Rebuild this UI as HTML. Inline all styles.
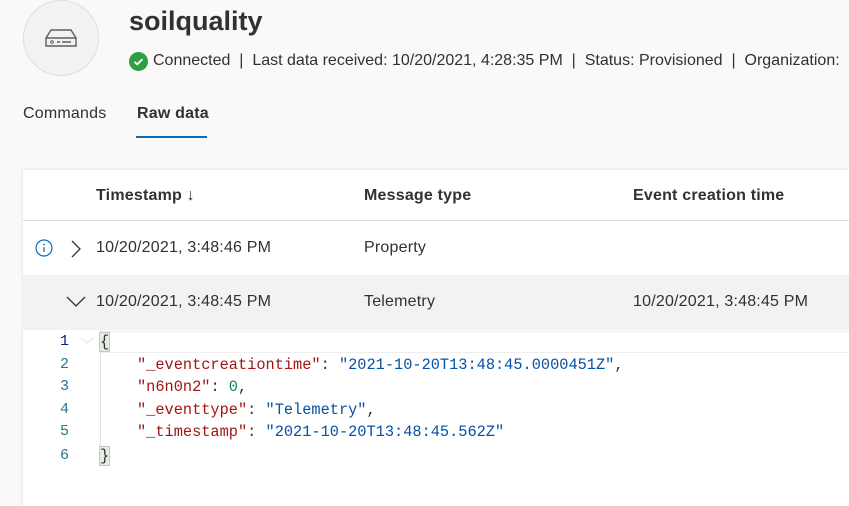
<!DOCTYPE html>
<html><head><style>
body{margin:0;width:849px;height:506px;background:#faf9f8;overflow:hidden;position:relative;font-family:"Segoe UI","Liberation Sans",sans-serif;color:#323130}
.a{position:absolute;white-space:nowrap}
.t{font-size:16px;letter-spacing:0.2px}
.circ{left:23px;top:0;width:76px;height:76px;border-radius:50%;border:1px solid #e1dfdd;background:#f3f2f1;box-sizing:border-box}
.card{left:23px;top:170px;width:826px;height:336px;background:#fff;box-shadow:0 0 3px rgba(0,0,0,.12)}
.mono{font-family:"Liberation Mono",monospace;font-size:15.3px}
.k{color:#a31515}.s{color:#0451a5}.n{color:#098658}
.ln{color:#237893;font-family:"Liberation Mono",monospace;font-size:15px;width:30px;text-align:right}
</style></head><body>
<div class="a circ"></div>
<svg class="a" style="left:44px;top:28px" width="34" height="20" viewBox="0 0 34 20"><path d="M7 2h20l5 8v8H2v-8z M2 10h30" fill="none" stroke="#605e5c" stroke-width="1.4"/><circle cx="8" cy="14" r="1.3" fill="none" stroke="#605e5c"/><path d="M13 14h3M18 14h9" stroke="#605e5c" stroke-width="1.4"/></svg>
<div class="a" style="left:129px;top:6px;font-size:27px;font-weight:600;color:#323130">soilquality</div>
<svg class="a" style="left:129px;top:52px" width="19" height="19"><circle cx="9.5" cy="9.5" r="9.5" fill="#2ea043"/><path d="M5.5 9.8l2.7 2.6 5.3-5.3" fill="none" stroke="#fff" stroke-width="1.8"/></svg>
<div class="a t" style="left:153px;top:52px;letter-spacing:0">Connected &nbsp;|&nbsp; Last data received: 10/20/2021, 4:28:35 PM &nbsp;|&nbsp; Status: Provisioned &nbsp;|&nbsp; Organization:</div>
<div class="a t" style="left:23px;top:105px">Commands</div>
<div class="a t" style="left:137px;top:105px;font-weight:600">Raw data</div>
<div class="a" style="left:136px;top:136px;width:71px;height:2px;background:#0f6cbd"></div>
<div class="a card"></div>
<div class="a" style="left:23px;top:220px;width:826px;height:1px;background:#e1dfdd"></div>
<div class="a t" style="left:96px;top:187px;font-weight:600">Timestamp ↓</div>
<div class="a t" style="left:364px;top:187px;font-weight:600">Message type</div>
<div class="a t" style="left:633px;top:187px;font-weight:600">Event creation time</div>
<svg class="a" style="left:35px;top:239px" width="18" height="18"><circle cx="9" cy="9" r="8" fill="none" stroke="#0f6cbd" stroke-width="1.2"/><path d="M9 8v5" stroke="#0f6cbd" stroke-width="1.3"/><circle cx="9" cy="5.5" r=".9" fill="#0f6cbd"/></svg>
<svg class="a" style="left:70px;top:240px" width="12" height="18"><path d="M2 1l8 8-8 8" fill="none" stroke="#323130" stroke-width="1.3"/></svg>
<div class="a t" style="left:96px;top:239px">10/20/2021, 3:48:46 PM</div>
<div class="a t" style="left:364px;top:239px">Property</div>
<div class="a" style="left:23px;top:275px;width:826px;height:55px;background:#f3f2f1"></div>
<svg class="a" style="left:66px;top:296px" width="20" height="12"><path d="M1 1l9 9 9-9" fill="none" stroke="#323130" stroke-width="1.3"/></svg>
<div class="a t" style="left:96px;top:293px">10/20/2021, 3:48:45 PM</div>
<div class="a t" style="left:364px;top:293px">Telemetry</div>
<div class="a t" style="left:633px;top:293px">10/20/2021, 3:48:45 PM</div>
<div class="a" style="left:100px;top:331px;width:749px;height:20px;border-top:1px solid #eee;border-bottom:1px solid #eee"></div>
<div class="a" style="left:100px;top:330px;width:1px;height:135px;background:#e0e0e0"></div>
<svg class="a" style="left:80px;top:337px" width="14" height="8"><path d="M1 1l6 5 6-5" fill="none" stroke="#e3e3e3" stroke-width="1"/></svg>
<div class="a ln" style="left:39px;top:333px;color:#0b216f">1</div>
<div class="a ln" style="left:39px;top:356px">2</div>
<div class="a ln" style="left:39px;top:378px">3</div>
<div class="a ln" style="left:39px;top:401px">4</div>
<div class="a ln" style="left:39px;top:423px">5</div>
<div class="a ln" style="left:39px;top:447px">6</div>
<div class="a mono" style="left:100px;top:333px;background:#e6ede4;outline:1px solid #c5c5c5">{</div>
<div class="a mono" style="left:137px;top:356px"><span class="k">"_eventcreationtime"</span>: <span class="s">"2021-10-20T13:48:45.0000451Z"</span>,</div>
<div class="a mono" style="left:137px;top:378px"><span class="k">"n6n0n2"</span>: <span class="n">0</span>,</div>
<div class="a mono" style="left:137px;top:401px"><span class="k">"_eventtype"</span>: <span class="s">"Telemetry"</span>,</div>
<div class="a mono" style="left:137px;top:423px"><span class="k">"_timestamp"</span>: <span class="s">"2021-10-20T13:48:45.562Z"</span></div>
<div class="a mono" style="left:100px;top:447px;background:#e6ede4;outline:1px solid #c5c5c5">}</div>
</body></html>
